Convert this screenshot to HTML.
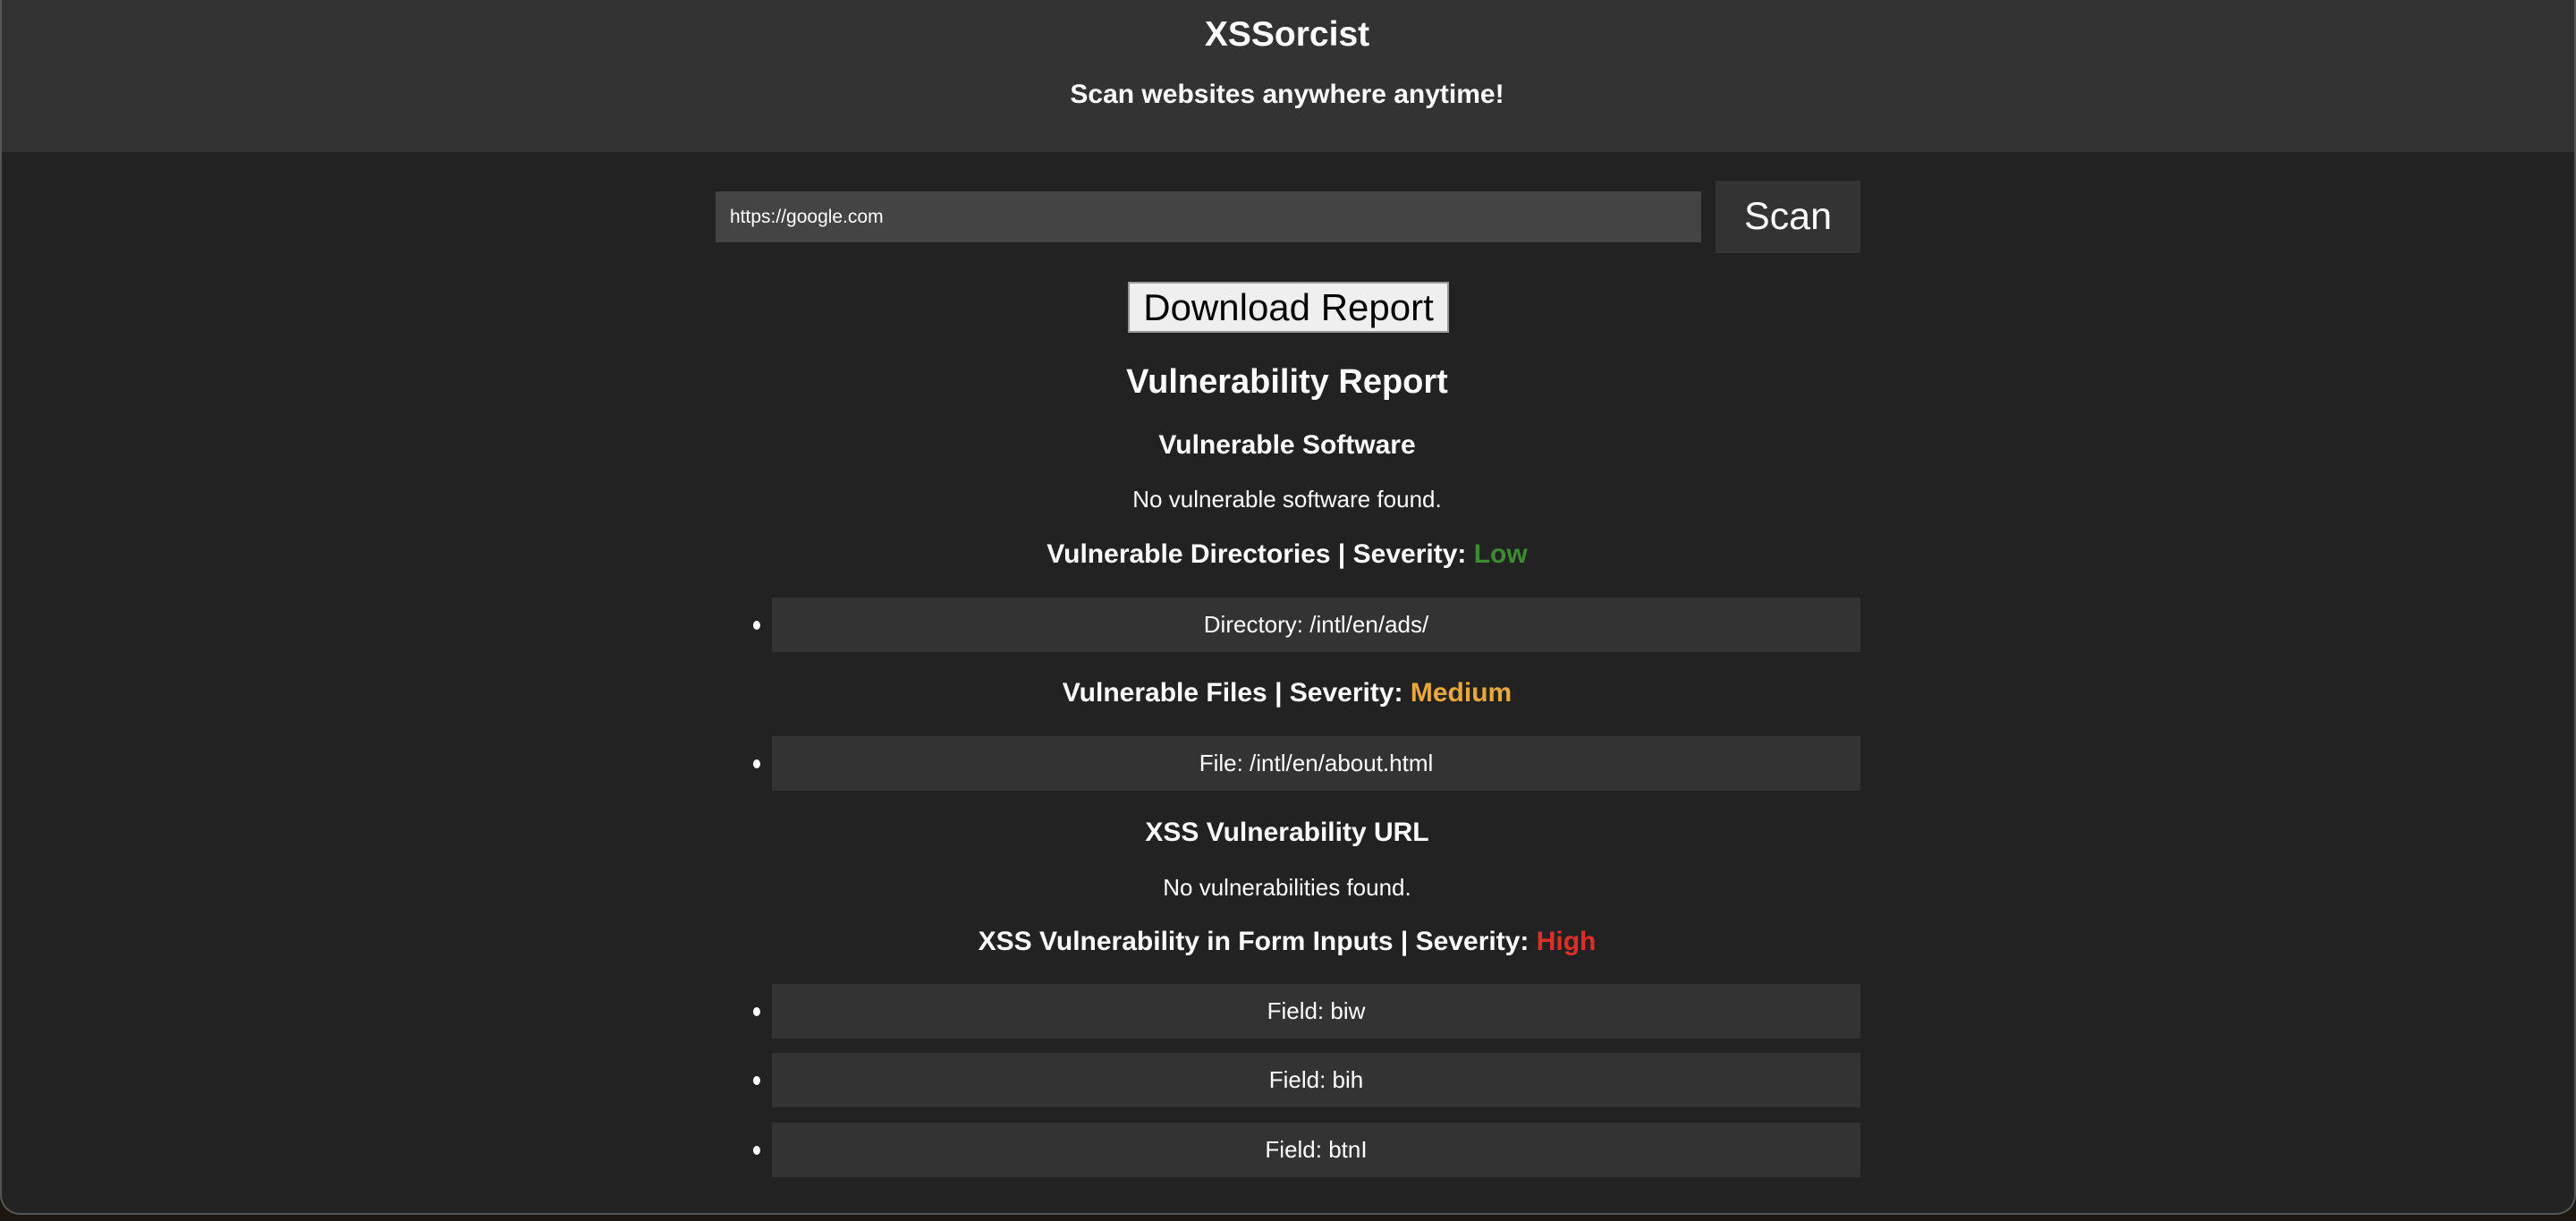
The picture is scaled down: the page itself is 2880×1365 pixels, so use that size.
<!DOCTYPE html>
<html><head><meta charset="utf-8"><style>
*{margin:0;padding:0;box-sizing:border-box}
html,body{width:2880px;height:1365px;overflow:hidden;background:#1b1610;font-family:"Liberation Sans",Arial,sans-serif;color:#fff}
#win{position:absolute;left:0;top:0;width:2880px;height:1358px;background:#222;border:2px solid #555;border-top:none;border-radius:0 0 22px 22px;overflow:hidden}
#hdr{position:absolute;left:0;top:0;width:100%;height:170px;background:#333}
.c{position:absolute;left:-3px;width:2880px;text-align:center;font-weight:bold;white-space:nowrap;line-height:1}
.p{font-weight:normal}
.box{position:absolute;left:861px;width:1217px;background:#333;text-align:center;font-size:26px;line-height:61px;height:61px}
.dot{position:absolute;left:840px;width:8px;height:10px;border-radius:50%;background:#fff}
</style></head><body>
<div id="win">
<div id="hdr"></div>
<div class="c" style="top:19px;font-size:39px">XSSorcist</div>
<div class="c" style="top:91px;font-size:30px">Scan websites anywhere anytime!</div>
<div style="position:absolute;left:798px;top:214px;width:1102px;height:57px;background:#444;font-size:21px;line-height:57px;padding-left:16px">https://google.com</div>
<div style="position:absolute;left:1916px;top:202px;width:162px;height:81px;background:#333;font-size:43px;line-height:81px;text-align:center">Scan</div>
<div style="position:absolute;left:1259px;top:315px;width:359px;height:57px;background:#efefef;border:2px solid #999;color:#000;font-size:42px;line-height:53px;text-align:center">Download Report</div>
<div class="c" style="top:408px;font-size:38px">Vulnerability Report</div>
<div class="c" style="top:483px;font-size:30px">Vulnerable Software</div>
<div class="c p" style="top:545px;font-size:26px">No vulnerable software found.</div>
<div class="c" style="top:605px;font-size:30px">Vulnerable Directories | Severity: <span style="color:#3d8b2f">Low</span></div>
<div class="dot" style="top:694px"></div><div class="box" style="top:668px">Directory: /intl/en/ads/</div>
<div class="c" style="top:760px;font-size:30px">Vulnerable Files | Severity: <span style="color:#eba83a">Medium</span></div>
<div class="dot" style="top:849px"></div><div class="box" style="top:823px">File: /intl/en/about.html</div>
<div class="c" style="top:916px;font-size:30px">XSS Vulnerability URL</div>
<div class="c p" style="top:979px;font-size:26px">No vulnerabilities found.</div>
<div class="c" style="top:1038px;font-size:30px">XSS Vulnerability in Form Inputs | Severity: <span style="color:#dc3027">High</span></div>
<div class="dot" style="top:1126px"></div><div class="box" style="top:1100px">Field: biw</div>
<div class="dot" style="top:1203px"></div><div class="box" style="top:1177px">Field: bih</div>
<div class="dot" style="top:1281px"></div><div class="box" style="top:1255px">Field: btnI</div>
</div>
</body></html>
